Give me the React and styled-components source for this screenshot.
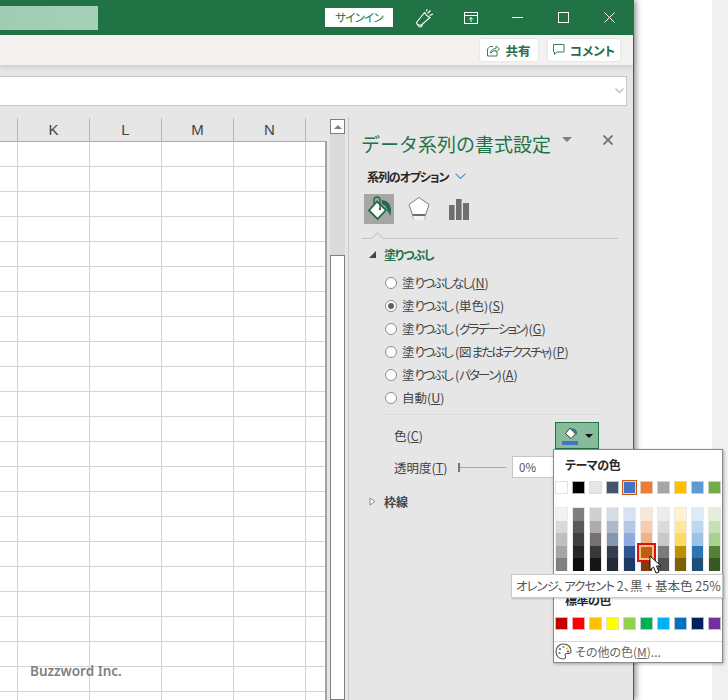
import React from "react";
import styled, { createGlobalStyle } from "styled-components";

const GlobalStyle = createGlobalStyle`
  html, body { margin: 0; padding: 0; background: #fff; }
  body {
    font-family: "Noto Sans CJK JP", "Noto Sans", sans-serif;
    font-feature-settings: "palt";
    overflow: hidden;
  }
  * { box-sizing: border-box; }
`;

const Page = styled.div`
  position: relative;
  width: 728px;
  height: 700px;
  display: flex;
  overflow: hidden;
`;

const Window = styled.div`
  width: 634px;
  height: 700px;
  display: flex;
  flex-direction: column;
  border-right: 1px solid #217346;
  box-shadow: 2px 0 6px rgba(0, 0, 0, 0.45);
  background: #e6e6e6;
  flex-shrink: 0;
  z-index: 1;
`;

const Outside = styled.div`
  flex: 1;
  background: #fff;
  display: flex;
  justify-content: flex-end;
`;

const OutsideStrip = styled.div`
  width: 16px;
  background: #f0f0f0;
`;

const TitleBar = styled.div`
  height: 35px;
  background: #217346;
  display: flex;
  align-items: center;
  flex-shrink: 0;
`;

const FadedName = styled.div`
  width: 98px;
  height: 24px;
  background: linear-gradient(90deg, #9fcdb3 0, #a6d0b7 100%);
`;

const SignIn = styled.div`
  margin-left: 227px;
  width: 68px;
  height: 19px;
  background: #fff;
  color: #217346;
  font-size: 11.5px;
  line-height: 19px;
  text-align: center;
  letter-spacing: -0.8px;
`;

const TitleIcon = styled.div`
  width: 46px;
  height: 35px;
  display: flex;
  align-items: center;
  justify-content: center;
`;

const TitleIcons = styled.div`
  margin-left: 9px;
  display: flex;
`;

const Ribbon = styled.div`
  height: 30px;
  background: #f3f2f1;
  display: flex;
  justify-content: flex-end;
  align-items: center;
  gap: 10px;
  padding-right: 13px;
  box-shadow: 0 2px 5px rgba(0, 0, 0, 0.12);
  flex-shrink: 0;
  z-index: 1;
`;

const RibbonButton = styled.div`
  height: 22px;
  background: #fff;
  width: ${(p) => p.$width}px;
  border-radius: 2px;
  box-shadow: 0 0 2px rgba(0, 0, 0, 0.15);
  display: flex;
  align-items: center;
  justify-content: center;
  gap: 5px;
  color: #2c6b4b;
  font-size: 12.5px;
  font-weight: 700;
`;

const FormulaArea = styled.div`
  height: 53px;
  padding: 11px 6px 12px 0;
  flex-shrink: 0;
`;

const FormulaBox = styled.div`
  height: 30px;
  background: #fff;
  border: 1px solid #c6c6c6;
  border-left: none;
  display: flex;
  align-items: center;
  justify-content: flex-end;
  padding-right: 2px;
`;

const Body = styled.div`
  flex: 1;
  display: flex;
  min-height: 0;
`;

const SheetArea = styled.div`
  width: 327px;
  display: flex;
  flex-direction: column;
  flex-shrink: 0;
`;

const ColumnHeader = styled.div`
  height: 23px;
  display: flex;
  flex-shrink: 0;
`;

const HeaderCell = styled.div`
  width: ${(p) => p.$width}px;
  border-right: ${(p) => (p.$last ? "none" : "1px solid #b8b8b8")};
  text-align: center;
  font-family: "Liberation Sans", sans-serif;
  font-size: 15px;
  line-height: 23px;
  color: #444;
`;

const Sheet = styled.div`
  flex: 1;
  background: #fff;
  border-top: 1px solid #ababab;
  border-right: 2px solid #a2a2a2;
  overflow: hidden;
`;

const Row = styled.div`
  height: 25px;
  display: flex;
`;

const Cell = styled.div`
  width: ${(p) => p.$width}px;
  border-right: ${(p) => (p.$last ? "none" : "1px solid #d4d4d4")};
  border-bottom: 1px solid #d4d4d4;
`;

const ScrollBar = styled.div`
  width: 15px;
  margin: 1px 3px 0 3px;
  background: #dadada;
  display: flex;
  flex-direction: column;
  flex-shrink: 0;
`;

const ScrollUp = styled.div`
  height: 15px;
  background: #fff;
  border: 1px solid #7f7f7f;
  display: flex;
  align-items: center;
  justify-content: center;
  &::before {
    content: "";
    border-left: 4px solid transparent;
    border-right: 4px solid transparent;
    border-bottom: 4px solid #808080;
  }
`;

const ScrollThumb = styled.div`
  margin-top: 121px;
  flex: 1;
  background: #fff;
  border: 1px solid #7f7f7f;
`;

const Panel = styled.div`
  flex: 1;
  border-left: 1px solid #c8c8c8;
  padding-top: 10px;
  background: #e6e6e6;
  display: flex;
  flex-direction: column;
  margin-top: -1px;
`;

const PanelHead = styled.div`
  display: flex;
  align-items: center;
  height: 34px;
  padding-left: 12px;
`;

const PanelTitle = styled.div`
  font-size: 19px;
  line-height: 34px;
  color: #217346;
  font-feature-settings: normal;
  width: 191px;
  white-space: nowrap;
`;

const HeadCaret = styled.div`
  margin: -10px 0 0 10px;
  border-left: 5px solid transparent;
  border-right: 5px solid transparent;
  border-top: 5px solid #7f7f7f;
`;

const PanelClose = styled.div`
  margin: -8px 0 0 31px;
  display: flex;
`;

const OptionsLine = styled.div`
  display: flex;
  align-items: center;
  gap: 7px;
  margin: 6px 0 0 18px;
  height: 18px;
  font-size: 12px;
  font-weight: 700;
  color: #262626;
  letter-spacing: -1.1px;
`;

const TabIcons = styled.div`
  display: flex;
  margin: 9px 0 0 15px;
  gap: 10px;
`;

const TabIcon = styled.div`
  width: 30px;
  height: 30px;
  background: ${(p) => (p.$active ? "#a6a6a6" : "transparent")};
  display: flex;
  align-items: center;
  justify-content: center;
`;

const TabRule = styled.div`
  position: relative;
  margin: 14px 15px 0 13px;
  height: 1px;
  background: #c4c4c4;
  &::after {
    content: "";
    position: absolute;
    left: 11px;
    top: -4px;
    width: 8px;
    height: 8px;
    background: #e6e6e6;
    border-left: 1px solid #c4c4c4;
    border-top: 1px solid #c4c4c4;
    transform: rotate(45deg);
  }
`;

const SectionHead = styled.div`
  display: flex;
  align-items: center;
  height: 18px;
  margin: ${(p) => p.$margin};
  padding-left: 20px;
  gap: 8px;
  font-size: 12px;
  font-weight: 700;
  color: ${(p) => p.$color};
  letter-spacing: ${(p) => p.$spacing || 0}px;
`;

const RadioList = styled.div`
  margin: 8px 0 0 36px;
  display: flex;
  flex-direction: column;
`;

const RadioRow = styled.div`
  height: 23px;
  display: flex;
  align-items: center;
  gap: 5px;
  font-size: 12.5px;
  color: #444;
  white-space: nowrap;
`;

const RadioDot = styled.div`
  width: 12px;
  height: 12px;
  border-radius: 50%;
  background: #fff;
  border: 1px solid #8d8d8d;
  display: flex;
  align-items: center;
  justify-content: center;
  &::after {
    content: "";
    width: 6px;
    height: 6px;
    border-radius: 50%;
    background: ${(p) => (p.$checked ? "#606060" : "transparent")};
  }
`;

const Key = styled.span`
  text-decoration: underline;
`;

const Kana = styled.span`
  letter-spacing: ${(p) => p.$spacing}px;
`;

const ThinRule = styled.div`
  margin: 5px 33px 0 36px;
  height: 1px;
  background: #dcdcdc;
`;

const FormRow = styled.div`
  display: flex;
  align-items: center;
  margin: ${(p) => p.$margin};
  padding-left: 45px;
  height: ${(p) => p.$height}px;
  font-size: 12.5px;
  color: #444;
  white-space: nowrap;
`;

const FormLabel = styled.div`
  width: ${(p) => p.$width}px;
`;

const ColorButton = styled.div`
  width: 44px;
  height: 27px;
  background: #86bc9b;
  border: 1px solid #217346;
  display: flex;
  align-items: center;
  justify-content: center;
  gap: 5px;
`;

const ButtonCaret = styled.div`
  border-left: 4px solid transparent;
  border-right: 4px solid transparent;
  border-top: 4px solid #111;
`;

const Slider = styled.div`
  width: 48px;
  height: 9px;
  border-left: 2px solid #777;
  position: relative;
  margin-right: 6px;
  &::after {
    content: "";
    position: absolute;
    left: 0;
    right: 0;
    top: 4px;
    height: 1px;
    background: #a6a6a6;
  }
`;

const PercentBox = styled.div`
  width: 60px;
  height: 22px;
  background: #fff;
  border: 1px solid #c6c6c6;
  padding-left: 6px;
  line-height: 20px;
  font-size: 11.5px;
  color: #555;
`;

const Popup = styled.div`
  position: absolute;
  left: 553px;
  top: 449px;
  width: 170px;
  height: 214px;
  background: #fff;
  border: 1px solid #8a8a8a;
  box-shadow: 1px 1px 3px rgba(0, 0, 0, 0.3);
  z-index: 2;
  display: flex;
  flex-direction: column;
`;

const PopupTitle = styled.div`
  margin: ${(p) => p.$margin};
  height: 16px;
  font-size: 12px;
  line-height: 16px;
  font-weight: 700;
  color: #262626;
  letter-spacing: -0.5px;
`;

const SwatchRow = styled.div`
  display: flex;
  gap: 4px;
  margin: ${(p) => p.$margin};
`;

const Swatch = styled.div`
  width: 13px;
  height: 13px;
  background: ${(p) => p.$color};
  border: 1px solid rgba(220, 220, 220, 0.8);
  ${(p) => p.$selected && "outline: 1px solid #c55a11; border: 1px solid #f4d2b4;"}
`;

const ShadeGrid = styled.div`
  display: flex;
  gap: 4px;
  margin: 13px 0 0 1px;
`;

const ShadeColumn = styled.div`
  width: 13px;
  display: flex;
  flex-direction: column;
  border: 1px solid rgba(225, 225, 225, 0.7);
  border-bottom: none;
`;

const Shade = styled.div`
  height: 12.6px;
  background: ${(p) => p.$color};
  position: relative;
`;

const ShadePick = styled.div`
  position: absolute;
  left: -4px;
  top: -3px;
  width: 19px;
  height: 19px;
  border: 2px solid #e01010;
  background: #c55a11;
  box-shadow: inset 0 0 0 2px #f6c67e;
  z-index: 1;
`;

const PopupRule = styled.div`
  margin-top: 11px;
  height: 1px;
  background: #d9d9d9;
`;

const MoreColors = styled.div`
  display: flex;
  align-items: center;
  gap: 3px;
  height: 22px;
  padding-left: 1px;
  font-size: 12px;
  color: #666;
  white-space: nowrap;
`;

const Tip = styled.div`
  position: absolute;
  left: 511px;
  top: 574px;
  width: 212px;
  height: 24px;
  background: #fff;
  border: 1px solid #c8c8c8;
  box-shadow: 1px 1px 2px rgba(0, 0, 0, 0.2);
  font-size: 12.5px;
  line-height: 22px;
  padding-left: 4px;
  color: #555;
  white-space: nowrap;
  z-index: 3;
`;

const Cursor = styled.svg`
  position: absolute;
  left: 649px;
  top: 555px;
  z-index: 4;
`;

const Watermark = styled.div`
  position: absolute;
  left: 30px;
  top: 661px;
  font-family: "Noto Sans", sans-serif;
  font-size: 13.5px;
  font-weight: 600;
  line-height: 20px;
  color: #7f7f7f;
  z-index: 2;
`;

const columns = [
  { label: "", width: 18 },
  { label: "K", width: 72 },
  { label: "L", width: 72 },
  { label: "M", width: 72 },
  { label: "N", width: 72 },
  { label: "", width: 19, last: true },
];

const rows = Array.from({ length: 23 }, (_, i) => i);

const radios = [
  ["塗りつぶしなし(", "N"],
  ["塗りつぶし (単色)(", "S", true],
  ["塗りつぶし (グラデーション)(", "G"],
  ["塗りつぶし (図またはテクスチャ)(", "P"],
  ["塗りつぶし (パターン)(", "A"],
  ["自動(", "U"],
];

const themeColors = ["#ffffff", "#000000", "#e7e6e6", "#44546a", "#4472c4", "#ed7d31", "#a5a5a5", "#ffc000", "#5b9bd5", "#70ad47"];

const standardColors = ["#c00000", "#ff0000", "#ffc000", "#ffff00", "#92d050", "#00b050", "#00b0f0", "#0070c0", "#002060", "#7030a0"];

const shades = [
  ["#f2f2f2", "#d9d9d9", "#bfbfbf", "#a6a6a6", "#7f7f7f"],
  ["#7f7f7f", "#595959", "#404040", "#262626", "#0d0d0d"],
  ["#d0cece", "#aeabab", "#757171", "#3a3838", "#171616"],
  ["#d6dce5", "#adb9ca", "#8497b0", "#333f50", "#222a35"],
  ["#d9e2f3", "#b4c7e7", "#8faadc", "#2f5597", "#1f3864"],
  ["#fbe5d6", "#f8cbad", "#f4b183", "#c55a11", "#843c0c"],
  ["#ededed", "#dbdbdb", "#c9c9c9", "#7b7b7b", "#525252"],
  ["#fff2cc", "#ffe699", "#ffd966", "#bf9000", "#7f6000"],
  ["#deebf7", "#bdd7ee", "#9dc3e6", "#2e75b6", "#1f4e79"],
  ["#e2f0d9", "#c5e0b4", "#a9d18e", "#548235", "#385723"],
];

// kana is much narrower than kanji in the UI font of the picture
const withTightKana = (text, spacing) =>
  text.split(/([ぁ-ヶー]+)/).map((part, i) =>
    i % 2 ? <Kana key={i} $spacing={spacing}>{part}</Kana> : part
  );

const FeedbackIcon = () => (
  <svg width="20" height="20" viewBox="0 0 20 20" fill="none" stroke="#fff" strokeWidth="1.1">
    <path d="M1.5 14.5 L9.5 4.5 Q11 8 15 9.5 L6.5 17 L2.5 17 Z" />
    <path d="M4 17 Q3 18.5 5 19 Q7 19 7.5 16.5" />
    <path d="M12.5 5.5 L15.5 2.5 M14.5 7.5 L18 6 M11.5 3.5 L12 1" />
  </svg>
);

const DisplayIcon = () => (
  <svg width="14" height="12" viewBox="0 0 14 12" fill="none" stroke="#fff" strokeWidth="1">
    <rect x="0.5" y="0.5" width="13" height="11" />
    <path d="M0.5 3.5 H13.5" />
    <path d="M7 10 V5.5 M5 7.5 L7 5.5 L9 7.5" />
  </svg>
);

const MinIcon = () => (
  <svg width="11" height="11" viewBox="0 0 11 11" stroke="#fff" strokeWidth="1">
    <path d="M0 5.5 H11" />
  </svg>
);

const MaxIcon = () => (
  <svg width="11" height="11" viewBox="0 0 11 11" fill="none" stroke="#fff" strokeWidth="1">
    <rect x="0.5" y="0.5" width="10" height="10" />
  </svg>
);

const CloseIcon = () => (
  <svg width="11" height="11" viewBox="0 0 11 11" fill="none" stroke="#fff" strokeWidth="1">
    <path d="M0.5 0.5 L10.5 10.5 M10.5 0.5 L0.5 10.5" />
  </svg>
);

const ShareIcon = () => (
  <svg width="13" height="13" viewBox="0 0 13 13" fill="none" stroke="#3b7a5a" strokeWidth="1">
    <path d="M6 2.5 H3 L0.5 5 V12 H10 V8" />
    <path d="M3.5 9 Q4 5 9 4.5 V2 L12.5 5 L9 8 V6.5 Q6 6.5 3.5 9 Z" />
  </svg>
);

const CommentIcon = () => (
  <svg width="12" height="12" viewBox="0 0 12 12" fill="none" stroke="#3b7a5a" strokeWidth="1">
    <path d="M0.5 0.5 H11 V8 H4 L1.5 10.5 V8 H0.5 Z" />
  </svg>
);

const Chevron = ({ color, size = 11, width = 1 }) => (
  <svg width={size} height={size * 0.6} viewBox="0 0 10 6" fill="none" stroke={color} strokeWidth={width}>
    <path d="M0.5 0.5 L5 5 L9.5 0.5" />
  </svg>
);

const XIcon = () => (
  <svg width="10" height="10" viewBox="0 0 10 10" fill="none" stroke="#737373" strokeWidth="1.9">
    <path d="M0.5 0.5 L9.5 9.5 M9.5 0.5 L0.5 9.5" />
  </svg>
);

const FillIcon = () => (
  <svg width="26" height="26" viewBox="0 0 26 26">
    <path d="M11 5.5 L20 14 L11.5 23 L3 14.5 Z" fill="#fff" stroke="#1f6b46" strokeWidth="1.8" />
    <path d="M8 8 V4 A3 3 0 0 1 14 4 V12" fill="none" stroke="#1f6b46" strokeWidth="1.4" />
    <circle cx="14" cy="13" r="1.2" fill="#1f6b46" />
    <path d="M15.5 4 Q24 4.5 25 13 L24.5 20 L21.5 15 Q20.5 9.5 16 8 Z" fill="#1f6b46" />
  </svg>
);

const PentagonIcon = () => (
  <svg width="22" height="26" viewBox="0 0 22 26">
    <path d="M11 1.5 L21 8.5 L17.5 19 H4.5 L1 8.5 Z" fill="#fff" stroke="#7f7f7f" strokeWidth="1" />
    <path d="M4.5 19 H17.5" stroke="#6e6e6e" strokeWidth="2" />
    <path d="M6 20 H16 L17 24 H5 Z" fill="#f4f4f4" />
    <path d="M4 20 L6 24 M18 20 L16 24" stroke="#c9c9c9" strokeWidth="1.4" />
  </svg>
);

const BarsIcon = () => (
  <svg width="20" height="21" viewBox="0 0 20 21" fill="#6f6f6f">
    <rect x="0" y="6" width="5.6" height="15" />
    <rect x="7" y="0" width="5.6" height="21" />
    <rect x="14" y="4" width="6" height="17" />
  </svg>
);

const BucketIcon = () => (
  <svg width="18" height="20" viewBox="0 0 18 20">
    <path d="M8 2 L13.5 8 L9 12.5 L3.5 7.5 Z" fill="#fff" stroke="#222" strokeWidth="0.9" />
    <path d="M10 2.5 Q15 2 15.5 9 L13.5 7 Q13 4.5 10 4 Z" fill="#1f6f8a" />
    <rect x="0" y="15" width="16" height="4" fill="#4472c4" />
  </svg>
);

const PaletteIcon = () => (
  <svg width="17" height="17" viewBox="0 0 17 17" fill="none">
    <path d="M8.5 1 C13 1 16 4 16 8 C16 11 13 10.5 11.5 10.5 C9.5 10.5 10 12.5 10.5 13.5 C11 15 9.5 16 8 16 C3.5 16 1 12.5 1 8.5 C1 4.5 4 1 8.5 1 Z" stroke="#555" strokeWidth="1.1" />
    <circle cx="5" cy="6" r="1.1" fill="#2e75b6" />
    <circle cx="8.5" cy="4" r="1.1" fill="#70ad47" />
    <circle cx="12" cy="5.5" r="1.1" fill="#ffc000" />
    <circle cx="13" cy="8.5" r="1.1" fill="#e03030" />
    <circle cx="4.5" cy="10" r="1.1" fill="#777" />
  </svg>
);

export default function App() {
  return (
    <>
      <GlobalStyle />
      <Page>
        <Window>
          <TitleBar>
            <FadedName />
            <SignIn>サインイン</SignIn>
            <TitleIcons>
              <TitleIcon><FeedbackIcon /></TitleIcon>
              <TitleIcon><DisplayIcon /></TitleIcon>
              <TitleIcon><MinIcon /></TitleIcon>
              <TitleIcon><MaxIcon /></TitleIcon>
              <TitleIcon><CloseIcon /></TitleIcon>
            </TitleIcons>
          </TitleBar>
          <Ribbon>
            <RibbonButton $width={58}><ShareIcon />共有</RibbonButton>
            <RibbonButton $width={72}><CommentIcon />コメント</RibbonButton>
          </Ribbon>
          <FormulaArea>
            <FormulaBox><Chevron color="#c0c0c0" size={9} width={1.6} /></FormulaBox>
          </FormulaArea>
          <Body>
            <SheetArea>
              <ColumnHeader>
                {columns.map((c, i) => (
                  <HeaderCell key={i} $width={c.width} $last={c.last}>{c.label}</HeaderCell>
                ))}
              </ColumnHeader>
              <Sheet>
                {rows.map((r) => (
                  <Row key={r}>
                    {columns.map((c, i) => (
                      <Cell key={i} $width={c.width} $last={c.last} />
                    ))}
                  </Row>
                ))}
              </Sheet>
            </SheetArea>
            <ScrollBar>
              <ScrollUp />
              <ScrollThumb />
            </ScrollBar>
            <Panel>
              <PanelHead>
                <PanelTitle>データ系列の書式設定</PanelTitle>
                <HeadCaret />
                <PanelClose><XIcon /></PanelClose>
              </PanelHead>
              <OptionsLine>
                系列のオプション
                <Chevron color="#4a90c8" />
              </OptionsLine>
              <TabIcons>
                <TabIcon $active><FillIcon /></TabIcon>
                <TabIcon><PentagonIcon /></TabIcon>
                <TabIcon><BarsIcon /></TabIcon>
              </TabIcons>
              <TabRule />
              <SectionHead $margin="6px 0 0 0" $color="#217346" $spacing={-1.2}>
                <svg width="7" height="7" viewBox="0 0 7 7"><path d="M7 0 V7 H0 Z" fill="#444" /></svg>
                塗りつぶし
              </SectionHead>
              <RadioList>
                {radios.map(([text, key, checked]) => (
                  <RadioRow key={key}>
                    <RadioDot $checked={checked} />
                    <span>{withTightKana(text, -1.8)}<Key>{key}</Key>)</span>
                  </RadioRow>
                ))}
              </RadioList>
              <ThinRule />
              <FormRow $margin="7px 0 0 0" $height={27}>
                <FormLabel $width={161}>色(<Key>C</Key>)</FormLabel>
                <ColorButton><BucketIcon /><ButtonCaret /></ColorButton>
              </FormRow>
              <FormRow $margin="7px 0 0 0" $height={22}>
                <FormLabel $width={64}>透明度(<Key>T</Key>)</FormLabel>
                <Slider />
                <PercentBox>0%</PercentBox>
              </FormRow>
              <SectionHead $margin="14px 0 0 0" $color="#444">
                <svg width="7" height="9" viewBox="0 0 7 9"><path d="M1 1 L6 4.5 L1 8 Z" fill="#fff" stroke="#888" /></svg>
                枠線
              </SectionHead>
            </Panel>
          </Body>
        </Window>
        <Outside>
          <OutsideStrip />
        </Outside>
        <Popup>
          <PopupTitle $margin="7px 0 0 11px">テーマの色</PopupTitle>
          <SwatchRow $margin="8px 0 0 1px">
            {themeColors.map((c, i) => (
              <Swatch key={c} $color={c} $selected={i === 4} />
            ))}
          </SwatchRow>
          <ShadeGrid>
            {shades.map((col, i) => (
              <ShadeColumn key={i}>
                {col.map((c, j) => (
                  <Shade key={c} $color={c}>
                    {i === 5 && j === 3 && <ShadePick />}
                  </Shade>
                ))}
              </ShadeColumn>
            ))}
          </ShadeGrid>
          <PopupTitle $margin="21px 0 0 11px">標準の色</PopupTitle>
          <SwatchRow $margin="9px 0 0 1px">
            {standardColors.map((c) => (
              <Swatch key={c} $color={c} />
            ))}
          </SwatchRow>
          <PopupRule />
          <MoreColors>
            <PaletteIcon />
            <span>その他の色(<Key>M</Key>)...</span>
          </MoreColors>
        </Popup>
        <Tip>{withTightKana("オレンジ、アクセント 2、黒 + 基本色 25%", -1)}</Tip>
        <Cursor width="16" height="20" viewBox="0 0 16 20">
          <path d="M1 1 L1 15 L4.5 12 L7 18 L10 17 L7.5 11 L12 11 Z" fill="#fff" stroke="#111" strokeWidth="1" />
        </Cursor>
        <Watermark>Buzzword Inc.</Watermark>
      </Page>
    </>
  );
}
